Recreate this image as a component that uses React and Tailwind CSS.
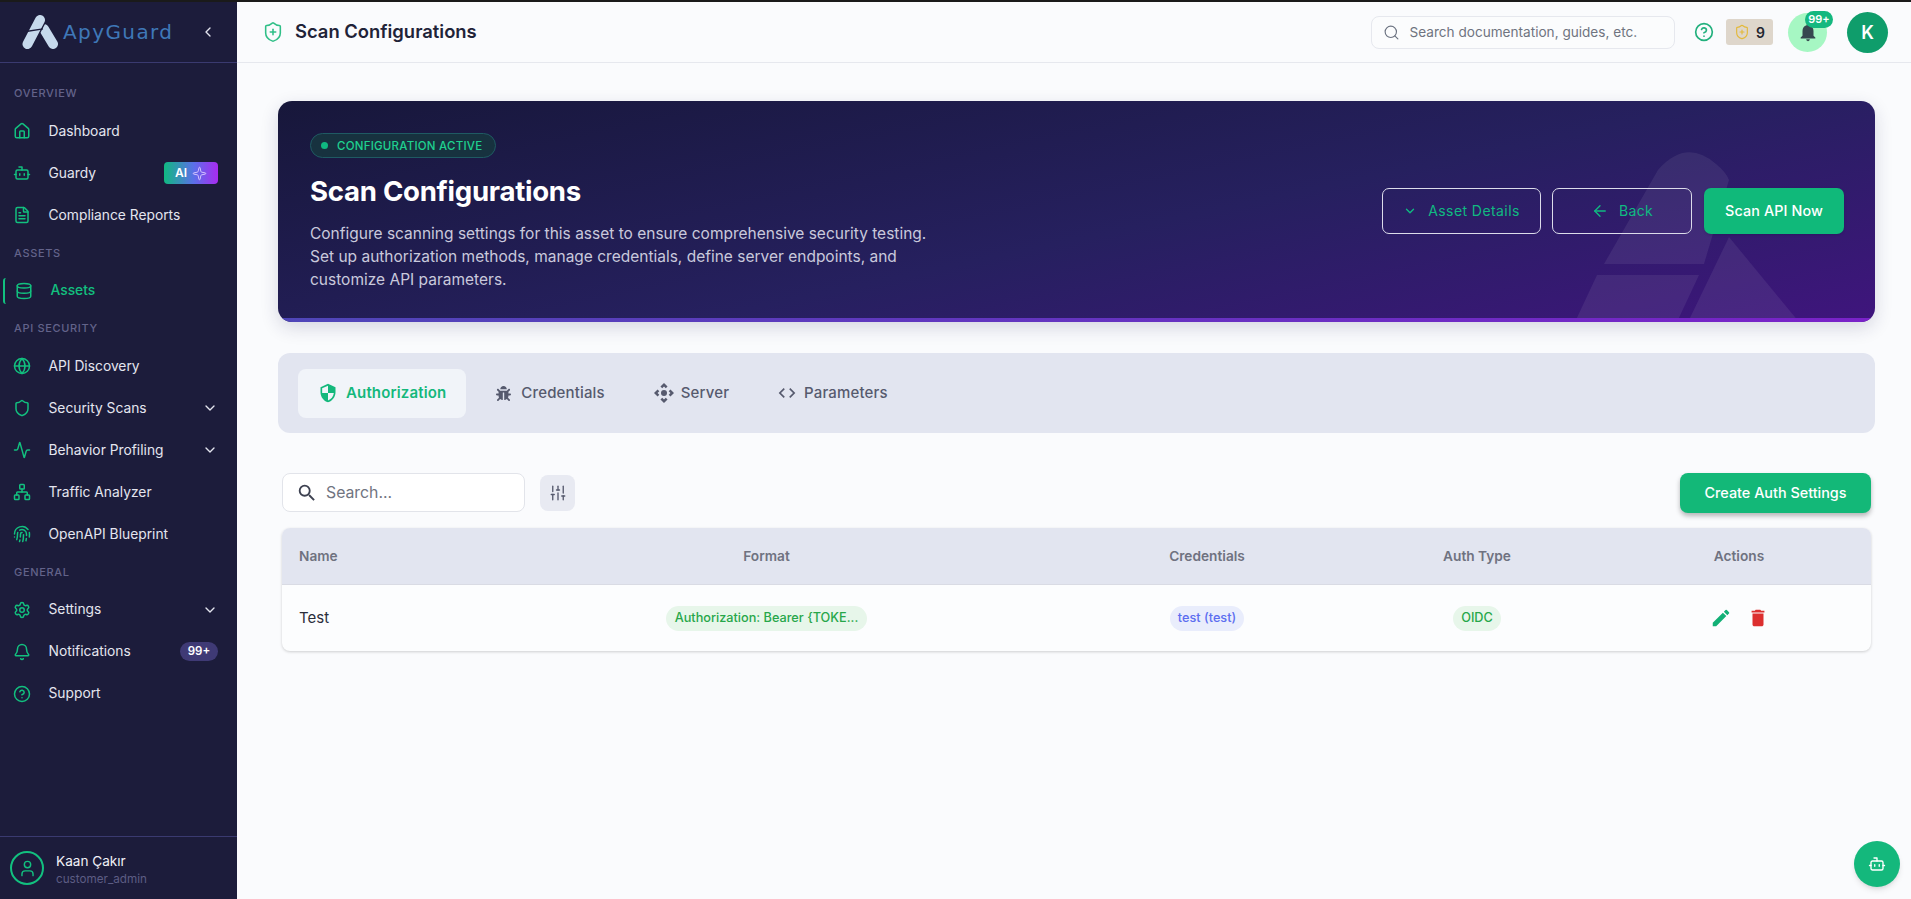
import React from "react";
import {
  Home, Bot, FileText, Database, Globe, Shield, Activity, Network, Fingerprint, Settings, Bell,
  CircleHelp, User, ChevronDown, ChevronLeft, ShieldPlus, Search, Sparkle, ArrowLeft, SlidersVertical,
} from "lucide-react";
import { MdSecurity, MdControlCamera, MdCode, MdSearch, MdEdit, MdDelete, MdNotifications } from "react-icons/md";
import { FaBug } from "react-icons/fa";

function Label({ children }) {
  return (
    <div className="h-[33.5px] flex items-center pl-[14px] text-[11px] font-medium tracking-[0.06em] text-[#63638a] uppercase">
      {children}
    </div>
  );
}

function Item({ icon: Icon, label, chevron, right }) {
  return (
    <div className="h-[42px] flex items-center pl-[13px] pr-[19px]">
      <Icon size={18} strokeWidth={2} className="text-[#12c07f] shrink-0" />
      <span className="ml-[17.5px] text-[13.8px] text-[#e4e5ef] flex-1">{label}</span>
      {chevron && <ChevronDown size={16} strokeWidth={2} className="text-[#e4e5ef]" />}
      {right}
    </div>
  );
}

function Logo() {
  return (
    <svg viewBox="0 0 36 34" className="w-[36px] h-[34px] shrink-0" strokeLinecap="round" fill="none">
      <path d="M22 14 L31 29" stroke="#c6d9ec" strokeWidth="10" />
      <path d="M18 5 L5.5 29" stroke="#1c1c3b" strokeWidth="12.5" />
      <path d="M18 5 L5.5 29" stroke="#c6d9ec" strokeWidth="10" />
      <path d="M4 16.5 L21 13.8" stroke="#1c1c3b" strokeWidth="1.3" strokeLinecap="butt" />
    </svg>
  );
}

function Sidebar() {
  return (
    <aside className="w-[237px] shrink-0 bg-[#1c1c3b] flex flex-col">
      <div className="h-[61px] shrink-0 border-b border-[#3a3a70] flex items-center pl-[22px] pr-[21px]">
        <Logo />
        <span className="ml-[5px] font-[family-name:'DejaVu_Sans',sans-serif] text-[20px] tracking-[0.07em] text-[#3f78b8] flex-1 leading-none">
          ApyGuard
        </span>
        <ChevronLeft size={16} className="text-[#e4e5ef]" />
      </div>
      <nav className="pt-[13.5px] flex-1">
        <Label>Overview</Label>
        <Item icon={Home} label="Dashboard" />
        <Item
          icon={Bot}
          label="Guardy"
          right={
            <span className="w-[54px] h-[22px] rounded-[4px] bg-[linear-gradient(90deg,#10b981,#5b6fe8_55%,#a82bf0)] flex items-center justify-center gap-[5px] text-white text-[12px] font-semibold">
              AI <Sparkle size={15} strokeWidth={1.5} className="text-[#d8c8ff]" />
            </span>
          }
        />
        <Item icon={FileText} label="Compliance Reports" />
        <Label>Assets</Label>
        <div className="relative pl-[2px]">
          <span className="absolute left-[3px] top-[8px] bottom-[8px] w-[3px] rounded-l-[4px] border-l-2 border-[#12c07f]" />
          <div className="h-[42px] flex items-center pl-[13px]">
            <Database size={18} strokeWidth={2} className="text-[#12c07f] shrink-0" />
            <span className="ml-[17.5px] text-[13.8px] font-medium text-[#12c07f]">Assets</span>
          </div>
        </div>
        <Label>API Security</Label>
        <Item icon={Globe} label="API Discovery" />
        <Item icon={Shield} label="Security Scans" chevron />
        <Item icon={Activity} label="Behavior Profiling" chevron />
        <Item icon={Network} label="Traffic Analyzer" />
        <Item icon={Fingerprint} label="OpenAPI Blueprint" />
        <Label>General</Label>
        <Item icon={Settings} label="Settings" chevron />
        <Item
          icon={Bell}
          label="Notifications"
          right={
            <span className="w-[38px] h-[19px] rounded-full bg-[#3f3a75] flex items-center justify-center text-white text-[11.5px] font-semibold">
              99+
            </span>
          }
        />
        <Item icon={CircleHelp} label="Support" />
      </nav>
      <div className="h-[63px] shrink-0 border-t border-[#3a3a70] flex items-center pl-[10px]">
        <span className="w-[34px] h-[34px] rounded-full border-2 border-[#12c07f] flex items-center justify-center">
          <User size={19} strokeWidth={1.8} className="text-[#12c07f]" />
        </span>
        <div className="ml-[12px] mt-[4px] flex flex-col">
          <span className="text-[13.6px] leading-[19px] text-[#f1f1f7]">Kaan Çakır</span>
          <span className="text-[11.7px] leading-[17px] text-[#5c5c84]">customer_admin</span>
        </div>
      </div>
    </aside>
  );
}

function Header() {
  return (
    <header className="h-[61px] shrink-0 border-b border-[#e6e8ee] flex items-center pl-[25px] pr-[23px]">
      <ShieldPlus size={22} strokeWidth={1.7} className="text-[#2fbf87]" />
      <h1 className="ml-[11px] text-[18.4px] font-semibold text-[#1f2338] flex-1">Scan Configurations</h1>
      <div className="w-[304px] h-[33px] rounded-[8px] border border-[#e6e8ee] bg-[#fbfcfd] flex items-center pl-[11px]">
        <Search size={17} strokeWidth={1.6} className="text-[#6b7280]" />
        <span className="ml-[10px] text-[13.6px] text-[#6f7480]">Search documentation, guides, etc.</span>
      </div>
      <CircleHelp size={20} strokeWidth={2} className="ml-[19px] text-[#22b07d]" />
      <div className="ml-[12.5px] w-[47px] h-[26px] rounded-[3px] bg-[#ded6cb] flex items-center justify-center gap-[6px]">
        <ShieldPlus size={16} strokeWidth={1.7} className="text-[#e3b93a]" />
        <span className="text-[14px] font-semibold text-[#22242e]">9</span>
      </div>
      <div className="relative ml-[15px] w-[39px] h-[39px] rounded-full bg-[#a6f7c3] flex items-center justify-center">
        <MdNotifications size={22} className="text-[#37474f]" />
        <span className="absolute left-[17px] top-[-2px] w-[28px] h-[17px] rounded-full bg-[#14b87f] text-white text-[11px] font-semibold flex items-center justify-center">
          99+
        </span>
      </div>
      <div className="ml-[20px] w-[41px] h-[41px] rounded-full bg-[#0f9d6b] text-white text-[18px] font-semibold flex items-center justify-center">
        K
      </div>
    </header>
  );
}

function Hero() {
  return (
    <section className="relative h-[221px] rounded-[14px] overflow-hidden shadow-[0_6px_18px_rgba(30,30,80,0.16)] bg-[linear-gradient(168deg,#17173a_0%,#26205f_55%,#3f157d_100%)] flex flex-col">
      <svg viewBox="0 0 240 172" className="absolute left-[1292px] top-[49px] w-[240px] h-[172px]">
        <g fill="#ffffff" fillOpacity="0.07">
          <path d="M34 114 L88 20 Q116 -12 146 14 Q156 22 159 30 L134 114 Z" />
          <path d="M27 125 L129 125 L107 172 L5 172 Z" />
          <path d="M159 87 L229 172 L118 172 Z" />
        </g>
      </svg>
      <div className="relative flex-1 flex items-center pl-[32px] pr-[31px]">
        <div className="flex-1 flex flex-col items-start mt-[4px]">
          <div className="h-[25px] w-[186px] rounded-full border border-[#1f5a63] bg-[#17323f] flex items-center pl-[10px] gap-[9px]">
            <span className="w-[7px] h-[7px] rounded-full bg-[#10b981]" />
            <span className="text-[11.5px] leading-[25px] pt-[2px] font-medium tracking-[0.02em] text-[#1fd08f]">CONFIGURATION ACTIVE</span>
          </div>
          <h2 className="mt-[15px] text-[27.6px] leading-[36px] font-bold tracking-[-0.01em] text-white">Scan Configurations</h2>
          <p className="mt-[13px] w-[640px] text-[15.5px] leading-[23px] text-[#c9c9dc]">
            Configure scanning settings for this asset to ensure comprehensive security testing. Set up authorization methods, manage credentials, define server endpoints, and customize API parameters.
          </p>
        </div>
        <div className="flex items-center gap-[11px] mt-[2px]">
          <button className="w-[159px] h-[46px] rounded-[7px] border border-[#dcdcea] flex items-center justify-center gap-[11px] text-[14px] tracking-[0.03em] text-[#10b981]">
            <ChevronDown size={14} strokeWidth={2.4} />
            Asset Details
          </button>
          <button className="w-[140px] h-[46px] rounded-[7px] border border-[#dcdcea] flex items-center justify-center gap-[10px] text-[14px] tracking-[0.02em] text-[#10b981]">
            <ArrowLeft size={18} strokeWidth={1.8} />
            Back
          </button>
          <button className="ml-[1px] w-[140px] h-[46px] rounded-[7px] bg-[#10b97a] shadow-sm flex items-center justify-center text-[14.3px] font-medium tracking-[0.01em] text-white">
            Scan API Now
          </button>
        </div>
      </div>
      <div className="relative h-[4px] shrink-0 bg-[linear-gradient(90deg,#4f46b8,#7a22c8)]" />
    </section>
  );
}

function Tab({ icon: Icon, label, active, size, iconClass, gap }) {
  return (
    <div className={"h-[49px] px-[20px] rounded-[8px] flex items-center " + gap + " " + (active ? "bg-[#f1f4f9] text-[#14b87c]" : "text-[#565a6e]")}>
      <Icon size={size} className={iconClass} />
      <span className={"text-[15px] tracking-[0.01em] " + (active ? "font-semibold" : "font-medium")}>{label}</span>
    </div>
  );
}

function Tabs() {
  return (
    <div className="mt-[31px] h-[80px] rounded-[12px] bg-[#e2e5f0] flex items-center pl-[20px] gap-[10px]">
      <Tab icon={MdSecurity} label="Authorization" active size={20} iconClass="" gap="gap-[8px]" />
      <Tab icon={FaBug} label="Credentials" size={15} iconClass="" gap="gap-[10px]" />
      <Tab icon={MdControlCamera} label="Server" size={24} iconClass="-ml-[3px]" gap="gap-[5px]" />
      <Tab icon={MdCode} label="Parameters" size={20} iconClass="-ml-[2px]" gap="gap-[7px]" />
    </div>
  );
}

function Toolbar() {
  return (
    <div className="mt-[40px] mx-[4px] flex items-start">
      <div className="w-[243px] h-[39px] rounded-[8px] border border-[#e2e4ea] bg-white flex items-center pl-[13px]">
        <MdSearch size={22} className="text-[#3d4150]" />
        <span className="ml-[8px] text-[15.8px] text-[#70747f]">Search...</span>
      </div>
      <button className="ml-[15px] mt-[2px] w-[35px] h-[36px] rounded-[8px] bg-[#e8eaf2] flex items-center justify-center">
        <SlidersVertical size={18} strokeWidth={1.8} className="text-[#565a6e]" />
      </button>
      <button className="ml-auto w-[191px] h-[40px] rounded-[8px] bg-[#13b878] shadow-[0_3px_5px_rgba(0,0,0,0.28)] text-white text-[14.4px] font-medium flex items-center justify-center">
        Create Auth Settings
      </button>
    </div>
  );
}

function Table() {
  return (
    <div className="mt-[15px] mx-[4px] rounded-[8px] bg-[#fcfdfe] shadow-[0_1px_3px_rgba(0,0,0,0.18)] overflow-hidden">
      <div className="h-[57px] bg-[#e2e5f0] border-b border-[#d9dbe4] grid grid-cols-[184px_601px_280px_260px_1fr] items-center text-[13.7px] font-semibold text-[#6f7280]">
        <div className="pl-[17px]">Name</div>
        <div className="text-center">Format</div>
        <div className="text-center">Credentials</div>
        <div className="text-center">Auth Type</div>
        <div className="text-center">Actions</div>
      </div>
      <div className="h-[66px] grid grid-cols-[184px_601px_280px_260px_1fr] items-center">
        <div className="pl-[17px] text-[15px] text-[#2a2d3a]">Test</div>
        <div className="flex justify-center">
          <span className="h-[25px] px-[8.5px] rounded-full bg-[#e7f6ea] text-[#27a74a] text-[12.7px] font-medium flex items-center">
            Authorization: Bearer {"{"}TOKE...
          </span>
        </div>
        <div className="flex justify-center">
          <span className="h-[25px] px-[8px] rounded-full bg-[#e9edfc] text-[#5c6df0] text-[12.7px] font-medium flex items-center">
            test (test)
          </span>
        </div>
        <div className="flex justify-center">
          <span className="h-[25px] px-[8px] rounded-full bg-[#e7f6ea] text-[#27a74a] text-[12.7px] font-medium flex items-center">
            OIDC
          </span>
        </div>
        <div className="flex justify-center items-center gap-[15px]">
          <MdEdit size={22} className="text-[#12b076]" />
          <MdDelete size={22} className="text-[#dc2f2f]" />
        </div>
      </div>
    </div>
  );
}

export default function App() {
  return (
    <div className="relative h-[899px] w-full overflow-hidden flex flex-col bg-[#fafbfd] font-[family-name:Inter,sans-serif]">
      <div className="h-[2px] shrink-0 bg-[#1a1a1a]" />
      <div className="flex-1 flex min-h-0">
        <Sidebar />
        <main className="flex-1 min-w-0 flex flex-col">
          <Header />
          <div className="pt-[38px] pl-[41px] pr-[36px]">
            <Hero />
            <Tabs />
            <Toolbar />
            <Table />
          </div>
        </main>
      </div>
      <button className="absolute right-[11px] bottom-[12px] w-[46px] h-[46px] rounded-full bg-[#14b87c] shadow-md flex items-center justify-center">
        <Bot size={18} strokeWidth={1.8} className="text-white" />
      </button>
    </div>
  );
}
